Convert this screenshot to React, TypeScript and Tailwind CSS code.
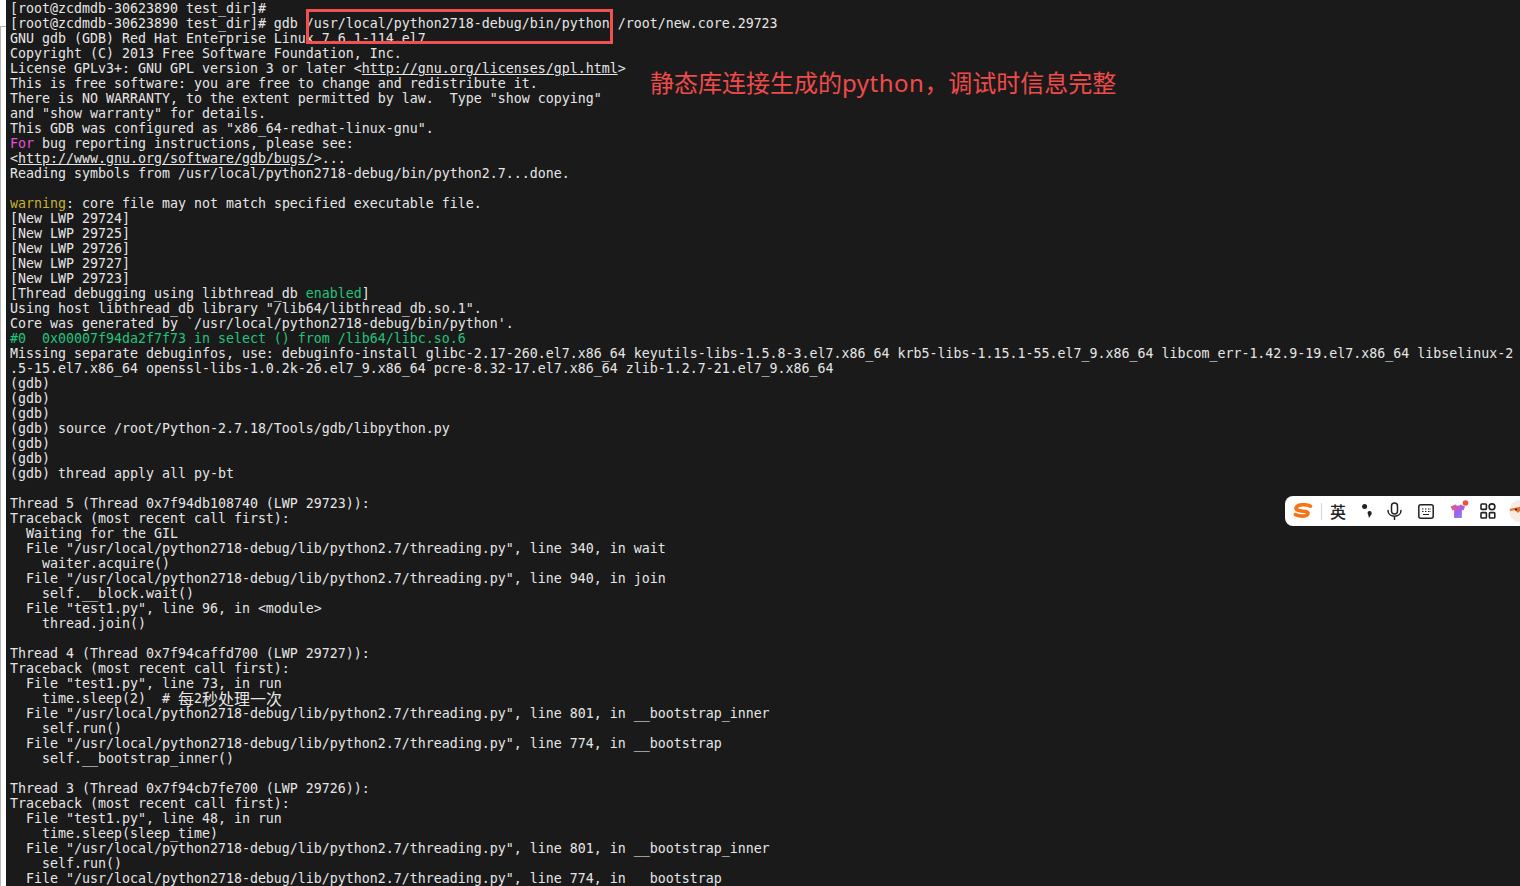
import React from 'react';

const lines: React.ReactNode[] = [
  '[root@zcdmdb-30623890 test_dir]#',
  '[root@zcdmdb-30623890 test_dir]# gdb /usr/local/python2718-debug/bin/python /root/new.core.29723',
  'GNU gdb (GDB) Red Hat Enterprise Linux 7.6.1-114.el7',
  'Copyright (C) 2013 Free Software Foundation, Inc.',
  <>License GPLv3+: GNU GPL version 3 or later &lt;<span className="underline">http://gnu.org/licenses/gpl.html</span>&gt;</>,
  'This is free software: you are free to change and redistribute it.',
  'There is NO WARRANTY, to the extent permitted by law.  Type "show copying"',
  'and "show warranty" for details.',
  'This GDB was configured as "x86_64-redhat-linux-gnu".',
  <><span className="text-[#e84fd8]">For</span> bug reporting instructions, please see:</>,
  <>&lt;<span className="underline">http://www.gnu.org/software/gdb/bugs/</span>&gt;...</>,
  'Reading symbols from /usr/local/python2718-debug/bin/python2.7...done.',
  '',
  <><span className="text-[#c9b02e]">warning</span>: core file may not match specified executable file.</>,
  '[New LWP 29724]',
  '[New LWP 29725]',
  '[New LWP 29726]',
  '[New LWP 29727]',
  '[New LWP 29723]',
  <>[Thread debugging using libthread_db <span className="text-[#22c47c]">enabled</span>]</>,
  'Using host libthread_db library "/lib64/libthread_db.so.1".',
  "Core was generated by `/usr/local/python2718-debug/bin/python'.",
  <span className="text-[#22c47c]">#0  0x00007f94da2f7f73 in select () from /lib64/libc.so.6</span>,
  'Missing separate debuginfos, use: debuginfo-install glibc-2.17-260.el7.x86_64 keyutils-libs-1.5.8-3.el7.x86_64 krb5-libs-1.15.1-55.el7_9.x86_64 libcom_err-1.42.9-19.el7.x86_64 libselinux-2',
  '.5-15.el7.x86_64 openssl-libs-1.0.2k-26.el7_9.x86_64 pcre-8.32-17.el7.x86_64 zlib-1.2.7-21.el7_9.x86_64',
  '(gdb)',
  '(gdb)',
  '(gdb)',
  '(gdb) source /root/Python-2.7.18/Tools/gdb/libpython.py',
  '(gdb)',
  '(gdb)',
  '(gdb) thread apply all py-bt',
  '',
  'Thread 5 (Thread 0x7f94db108740 (LWP 29723)):',
  'Traceback (most recent call first):',
  '  Waiting for the GIL',
  '  File "/usr/local/python2718-debug/lib/python2.7/threading.py", line 340, in wait',
  '    waiter.acquire()',
  '  File "/usr/local/python2718-debug/lib/python2.7/threading.py", line 940, in join',
  '    self.__block.wait()',
  '  File "test1.py", line 96, in <module>',
  '    thread.join()',
  '',
  'Thread 4 (Thread 0x7f94caffd700 (LWP 29727)):',
  'Traceback (most recent call first):',
  '  File "test1.py", line 73, in run',
  <>    time.sleep(2)  # <Cjk>每</Cjk>2<Cjk>秒处理一次</Cjk></>,
  '  File "/usr/local/python2718-debug/lib/python2.7/threading.py", line 801, in __bootstrap_inner',
  '    self.run()',
  '  File "/usr/local/python2718-debug/lib/python2.7/threading.py", line 774, in __bootstrap',
  '    self.__bootstrap_inner()',
  '',
  'Thread 3 (Thread 0x7f94cb7fe700 (LWP 29726)):',
  'Traceback (most recent call first):',
  '  File "test1.py", line 48, in run',
  '    time.sleep(sleep_time)',
  '  File "/usr/local/python2718-debug/lib/python2.7/threading.py", line 801, in __bootstrap_inner',
  '    self.run()',
  '  File "/usr/local/python2718-debug/lib/python2.7/threading.py", line 774, in __bootstrap',
];

function Cjk({ children }: { children: React.ReactNode }) {
  return <span className="align-[-2px] font-['Noto_Sans_CJK_SC',sans-serif] text-[16px] leading-[0]">{children}</span>;
}

function ImeToolbar() {
  return (
    <div className="absolute right-0 top-[496px] flex h-[30px] w-[235px] items-center overflow-hidden rounded-l-lg bg-white">
      <svg viewBox="0 0 20 16" className="ml-[8px] h-[16px] w-[20px] shrink-0" fill="none">
        <path d="M17.5 3.2C14 1.2 5 1 3.2 4.4 2 7 6 8 10 8.2c3.6.2 6 1 4.6 3.2-1.6 2.4-8 2.2-12.2.2" stroke="#f97316" strokeWidth="3.6" strokeLinecap="round" />
      </svg>
      <div className="ml-[8px] h-[17px] w-px shrink-0 bg-gray-300" />
      <span className="ml-[8px] w-[17px] shrink-0 font-['Noto_Sans_CJK_SC',sans-serif] text-[16px] leading-none font-medium text-[#222]">英</span>
      <svg viewBox="0 0 10 14" className="ml-[15px] h-[14px] w-[10px] shrink-0" fill="#222">
        <circle cx="2.6" cy="2.6" r="2.5" />
        <circle cx="7.6" cy="9" r="2.1" />
        <path d="M6 10h3.6L7 14z" />
      </svg>
      <svg viewBox="0 0 15 18" className="ml-[15px] h-[18px] w-[15px] shrink-0" fill="none" stroke="#222" strokeWidth="1.5">
        <rect x="4.5" y="1" width="6" height="11" rx="3" />
        <path d="M1 8.5c0 7.5 13 7.5 13 0M7.5 14.5v3" strokeLinecap="round" />
      </svg>
      <svg viewBox="0 0 16 15" className="ml-[16px] h-[15px] w-[16px] shrink-0" fill="none" stroke="#222">
        <rect x="0.8" y="0.8" width="14.4" height="13.4" rx="2" strokeWidth="1.5" />
        <path d="M4 5h1.5M7 5h1.5M10 5h1.5M12.5 5h.5M4 7.5h1.5M7 7.5h1.5M10 7.5h1.5M12.5 7.5h.5M5 10.5h6" strokeWidth="1.2" />
      </svg>
      <svg viewBox="0 0 19 19" className="mb-[3px] ml-[16px] h-[19px] w-[19px] shrink-0">
        <defs>
          <linearGradient id="shirt" x1="0" y1="0" x2="1" y2="1">
            <stop offset="0" stopColor="#f0605c" />
            <stop offset="0.55" stopColor="#a55cf0" />
            <stop offset="1" stopColor="#5aa6ff" />
          </linearGradient>
        </defs>
        <path d="M0.5 6.5 5.5 4.5c1 1.6 3.6 1.6 5 0l4.5 2-1.5 4-1.6-.6V18H4.1V9.9L2.5 10.5z" fill="url(#shirt)" />
        <circle cx="15.5" cy="3" r="2.8" fill="#f0503c" />
      </svg>
      <svg viewBox="0 0 16 16" className="ml-[11px] h-[16px] w-[16px] shrink-0" fill="none" stroke="#222" strokeWidth="1.6">
        <rect x="1" y="1" width="5.4" height="5.4" rx="0.8" />
        <circle cx="12" cy="3.8" r="2.9" />
        <rect x="1" y="9.6" width="5.4" height="5.4" rx="0.8" />
        <rect x="9.4" y="9.6" width="5.4" height="5.4" rx="0.8" />
      </svg>
      <svg viewBox="0 0 22 22" className="ml-[13px] h-[22px] w-[22px] shrink-0">
        <circle cx="11" cy="11" r="11" fill="#f6ece6" />
        <path d="M1 9 12 6.5l3 2-3 1.5-3 3-3-3-5 1z" fill="#ea6a2a" />
        <circle cx="7" cy="9.5" r="1.1" fill="#222" />
      </svg>
    </div>
  );
}

export default function App() {
  return (
    <div className="relative flex h-[886px] w-[1520px] overflow-hidden bg-white">
      <div className="mt-[26px] h-[860px] w-[6px] shrink-0 border-t border-l border-[#b8b8b8] bg-white" />
      <div className="h-full min-w-0 flex-1 overflow-hidden bg-[#1a1a1a] pt-px pl-1 font-['DejaVu_Sans_Mono',monospace] text-[13.29px] text-[#e6e6e6]">
        {lines.map((line, i) => (
          <div key={i} className="h-[15px] leading-[15px] whitespace-pre">
            {line}
          </div>
        ))}
      </div>

      <div className="absolute top-[9px] left-[306px] h-[35px] w-[307px] border-[3px] border-[#f05050]" />
      <div className="absolute top-[65px] left-[650px] font-['Noto_Sans','Noto_Sans_CJK_SC',sans-serif] text-[24px] leading-[36px] whitespace-pre text-[#f04a4a]">
        静态库连接生成的<span className="tracking-[0.5px]">python</span>，调试时信息完整
      </div>
      <ImeToolbar />
    </div>
  );
}
